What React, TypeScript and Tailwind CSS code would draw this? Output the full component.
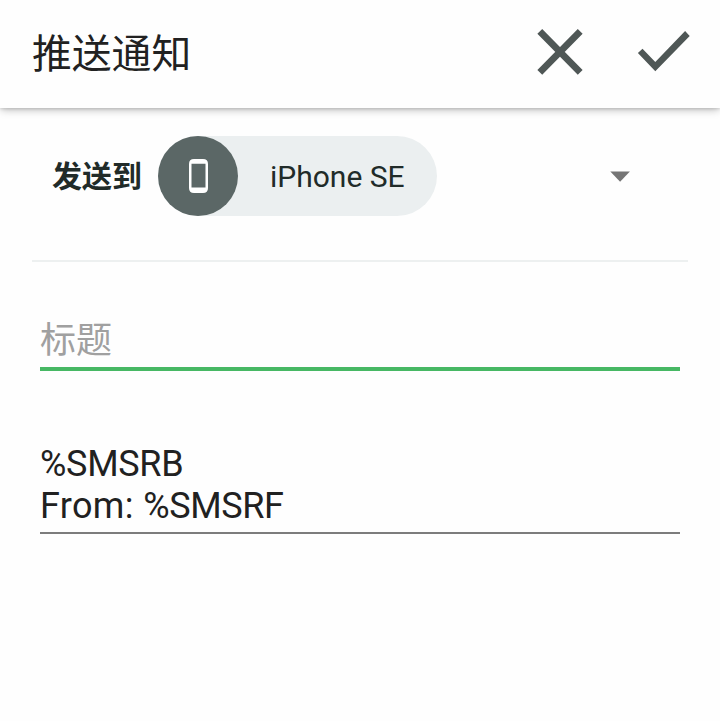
export default function App() {
  return (
    <div className="flex h-[721px] w-[720px] flex-col overflow-hidden bg-[#fefefe] font-[Roboto,'Noto_Sans_CJK_SC',sans-serif] text-[#212121]">
      <header className="flex h-[108px] shrink-0 items-center bg-[#fefefe] pl-8 shadow-[0_3px_8px_-1px_rgba(0,0,0,0.25),0_1px_3px_rgba(0,0,0,0.13)]">
        <h1 className="flex-1 pt-0.5 text-[39.8px] leading-[108px]">推送通知</h1>
        <button aria-label="取消" className="h-[108px] w-[104px]">
          <svg viewBox="0 0 104 108" className="h-[108px] w-[104px]" fill="none" stroke="#4f5756" strokeWidth="6.8">
            <path d="M31.8 31.3 72.2 72.3M72.2 31.3 31.8 72.3" />
          </svg>
        </button>
        <button aria-label="确定" className="h-[108px] w-[108px]">
          <svg viewBox="0 0 108 108" className="h-[108px] w-[108px]" fill="#4f5756">
            <path d="M43.3 62 30.5 48.8 25.9 53 43.3 71.2 77.7 35.9 73.1 31.1Z" />
          </svg>
        </button>
      </header>
      <main className="px-8">
        <div className="flex h-[154px] items-start border-b-2 border-[#edf0f0] pl-5 pt-7">
          <span className="w-[106px] pt-px text-[30px] font-bold leading-[80px] text-[#212b29]">发送到</span>
          <div className="flex h-20 w-[279px] items-center rounded-full bg-[#ebeff0]">
            <div className="flex size-20 items-center justify-center rounded-full bg-[#5b6766]">
              <svg viewBox="0 0 19 34" className="h-[34px] w-[19px]">
                <path fillRule="evenodd" fill="white" d="M5 0H14Q19 0 19 5V29Q19 34 14 34H5Q0 34 0 29V5Q0 0 5 0ZM2.5 4.7V28.5H16.5V4.7Z" />
              </svg>
            </div>
            <span className="pl-8 pt-0.5 text-[30px] leading-[80px] text-[#212b29]">iPhone SE</span>
          </div>
          <svg viewBox="0 0 20 11" className="ml-[173px] mt-[35px] h-[11px] w-5">
            <path d="M0.3 0.5H19.9L10.1 10.7Z" fill="#757575" />
          </svg>
        </div>
        <div className="mx-2 mt-[46px] h-[63px] border-b-4 border-[#47b864] pt-[3px] text-[36px] leading-[60px] text-[#a0a0a0]">标题</div>
        <div className="mx-2 mt-[71px] h-[92px] border-b-2 border-[#7c7c7c] pt-px text-[36px] leading-[42px]">
          <p className="tracking-[-0.3px]">%SMSRB</p>
          <p>
            <span className="tracking-[0.35px]">From: </span>
            <span className="tracking-[-0.35px]">%SMSRF</span>
          </p>
        </div>
      </main>
    </div>
  );
}
